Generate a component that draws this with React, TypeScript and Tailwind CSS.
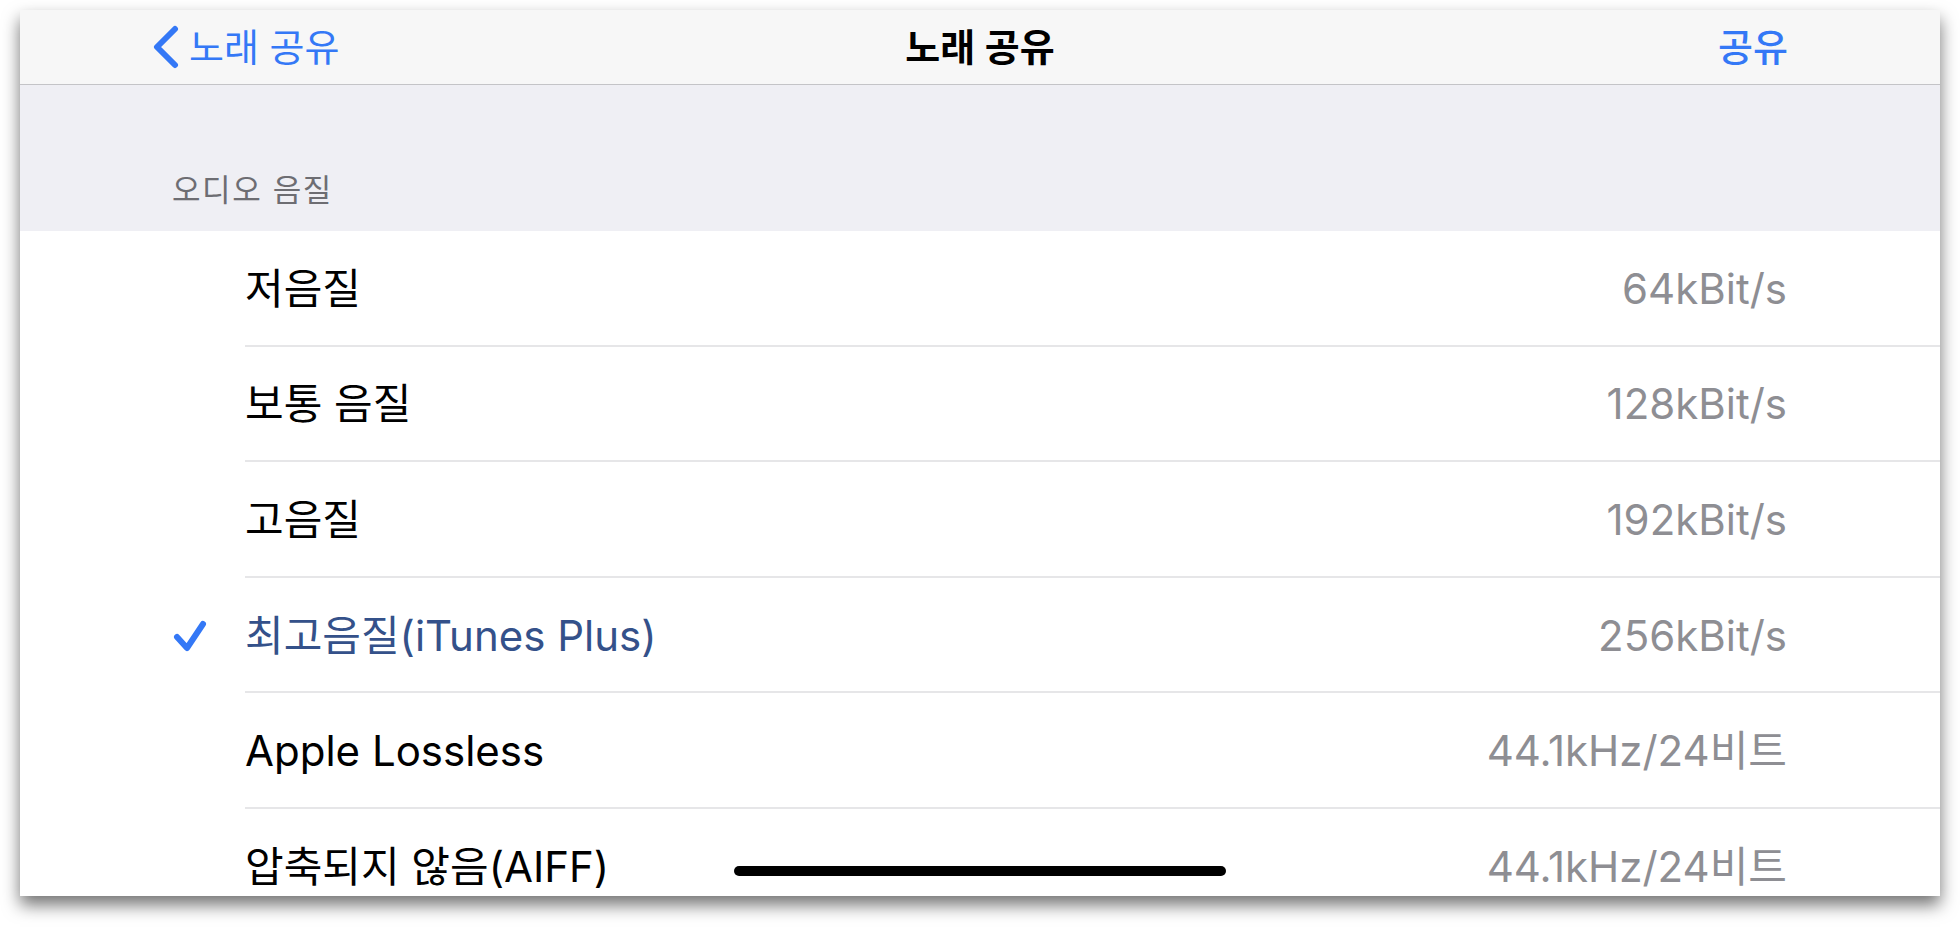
import React from "react";

const rows = [
  { label: "저음질", value: "64kBit/s", selected: false },
  { label: "보통 음질", value: "128kBit/s", selected: false },
  { label: "고음질", value: "192kBit/s", selected: false },
  { label: "최고음질(iTunes Plus)", value: "256kBit/s", selected: true },
  { label: "Apple Lossless", value: "44.1kHz/24비트", selected: false },
  { label: "압축되지 않음(AIFF)", value: "44.1kHz/24비트", selected: false },
];

export default function App() {
  return (
    <div className="w-[1960px] h-[927px] bg-white pl-[20px] pt-[10px] font-['Inter','Noto_Sans_CJK_KR',sans-serif]">
      <div className="relative w-[1920px] h-[886px] overflow-hidden bg-white shadow-[0_9px_16px_rgba(0,0,0,0.55)] flex flex-col">
        {/* Nav bar */}
        <div className="h-[75px] shrink-0 bg-[#f7f7f7] border-b border-[#c4c4c7] flex items-center pl-[132px] pr-[152px] relative">
          <div className="flex items-center text-[#3478f6]">
            <svg width="30" height="44" viewBox="0 0 30 44" className="mr-[7px]">
              <path d="M23 4 L5 22 L23 40" fill="none" stroke="#3478f6" strokeWidth="6" strokeLinecap="round" strokeLinejoin="round" />
            </svg>
            <span className="text-[38px] leading-none">노래 공유</span>
          </div>
          <div className="absolute left-0 right-0 top-0 bottom-0 flex items-center justify-center pointer-events-none">
            <span className="text-[38px] font-semibold text-black leading-none">노래 공유</span>
          </div>
          <div className="ml-auto text-[38px] font-medium text-[#3478f6] leading-none">공유</div>
        </div>
        {/* Section header */}
        <div className="h-[146px] shrink-0 bg-[#efeff4] flex items-end pl-[152px] pb-[26px]">
          <span className="text-[31px] tracking-[1.6px] text-[#6d6d72] leading-none">오디오 음질</span>
        </div>
        {/* Rows */}
        <div className="flex flex-col">
          {rows.map((r, i) => (
            <div key={i} className="relative h-[115.6px] shrink-0 flex items-center pl-[225px] pr-[153px]">
              {r.selected && (
                <svg width="34" height="34" viewBox="0 0 34 34" className="absolute left-[153px] top-1/2 -translate-y-1/2">
                  <path d="M4 18 L14 29 L30 5" fill="none" stroke="#3478f6" strokeWidth="6" strokeLinecap="round" strokeLinejoin="round" />
                </svg>
              )}
              <span className={`text-[42px] leading-none ${r.selected ? "text-[#34518a]" : "text-black"}`}>{r.label}</span>
              <span className="ml-auto text-[42px] leading-none text-[#8e8e93]">{r.value}</span>
              {i < rows.length - 1 && (
                <div className="absolute left-[225px] right-0 bottom-0 h-[2px] bg-[#e6e6e8]" />
              )}
            </div>
          ))}
        </div>
        {/* Home indicator */}
        <div className="absolute left-[714px] top-[856px] w-[492px] h-[10px] rounded-full bg-black" />
      </div>
    </div>
  );
}
